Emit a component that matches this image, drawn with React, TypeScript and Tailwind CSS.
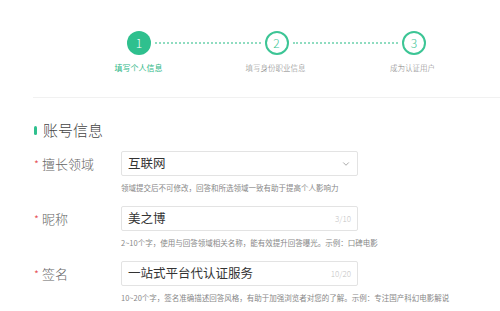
import { ChevronDown } from "lucide-react";

const steps = [
  { no: "1", label: "填写个人信息", active: true },
  { no: "2", label: "填写身份职业信息", active: false },
  { no: "3", label: "成为认证用户", active: false },
];

const fields = [
  {
    label: "擅长领域",
    value: "互联网",
    select: true,
    hint: "领域提交后不可修改，回答和所选领域一致有助于提高个人影响力",
  },
  {
    label: "昵称",
    value: "美之博",
    count: "3/10",
    hint: "2~10个字，使用与回答领域相关名称，能有效提升回答曝光。示例：口碑电影",
  },
  {
    label: "签名",
    value: "一站式平台代认证服务",
    count: "10/20",
    hint: "10~20个字，签名准确描述回答风格，有助于加强浏览者对您的了解。示例：专注国产科幻电影解说",
  },
];

const Circle = ({ no, active }: { no: string; active: boolean }) => (
  <div
    className={
      active
        ? "w-[24px] h-[24px] rounded-full bg-[#2fc08e] text-white flex items-center justify-center text-[12px]"
        : "w-[24px] h-[24px] rounded-full border-2 border-[#3cc595] text-[#3cc595] flex items-center justify-center text-[12px]"
    }
  >
    {no}
  </div>
);

export default function App() {
  return (
    <div className="w-[500px] h-[311px] bg-white overflow-hidden font-light font-['Noto_Sans_CJK_SC','Noto_Sans',sans-serif]">
      <div className="pt-[31px] pl-[127px]">
        <div className="w-[299px] flex items-center">
          <Circle no="1" active />
          <div className="flex-1 mx-[4px] border-t-2 border-dotted border-[#8fdcc0]" />
          <Circle no="2" active={false} />
          <div className="flex-1 mx-[4px] border-t-2 border-dotted border-[#8fdcc0]" />
          <Circle no="3" active={false} />
        </div>
      </div>
      <div className="flex pl-[70px] mt-[8px]">
        {steps.map((s) => (
          <div
            key={s.no}
            className={
              s.active
                ? "w-[137px] text-center text-[8px] leading-[10px] text-[#2fb887] font-normal"
                : "w-[137px] text-center text-[7.5px] leading-[10px] text-[#808080]"
            }
          >
            {s.label}
          </div>
        ))}
      </div>
      <div className="ml-[33px] mt-[24px] h-px bg-[#f1f1f1]" />

      <div className="pl-[34px]">
        <div className="mt-[22px] flex items-center h-[20px]">
          <div className="w-[3px] h-[9px] bg-[#2fc08e] rounded-sm" />
          <div className="ml-[6px] text-[15px] text-[#444]">账号信息</div>
        </div>

        <div className="mt-[11px]">
          {fields.map((f) => (
            <div key={f.label} className="flex items-start h-[55px]">
              <div className="w-[87px] h-[25px] flex items-center text-[13px] text-[#666]">
                <span className="text-[#e5484d] text-[11px] leading-[11px] w-[8px] pt-[2px]">*</span>
                {f.label}
              </div>
              <div>
                <div className="w-[237px] h-[25px] border border-[#e3e3e3] rounded-[2px] flex items-center px-[6px]">
                  <span className="flex-1 text-[12.5px] text-[#333] font-normal">{f.value}</span>
                  {f.select ? (
                    <ChevronDown className="w-[10px] h-[10px] text-[#999]" />
                  ) : (
                    <span className="text-[8px] text-[#c4c4c4]">{f.count}</span>
                  )}
                </div>
                <div className="mt-[7px] text-[7.5px] leading-[9px] text-[#888] font-normal whitespace-nowrap">
                  {f.hint}
                </div>
              </div>
            </div>
          ))}
        </div>
      </div>
    </div>
  );
}
